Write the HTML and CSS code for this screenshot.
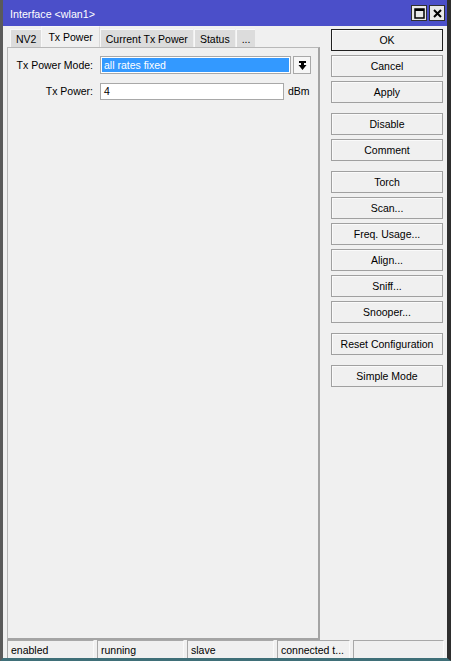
FILE: index.html
```html
<!DOCTYPE html>
<html>
<head>
<meta charset="utf-8">
<link rel="stylesheet" href="styles.css">
</head>
<body>
<div class="window">
  <div class="titlebar">
    <span class="title">Interface &lt;wlan1&gt;</span>
    <div class="tbtns">
      <span class="tbtn"><svg width="13" height="13" viewBox="0 0 13 13"><rect x="2" y="2" width="9" height="9" fill="none" stroke="#000" stroke-width="1.5"/><line x1="2" y1="3" x2="11" y2="3" stroke="#000" stroke-width="2"/></svg></span>
      <span class="tbtn"><svg width="13" height="13" viewBox="0 0 13 13"><path d="M3 3 L10 10 M10 3 L3 10" stroke="#000" stroke-width="2"/></svg></span>
    </div>
  </div>
  <div class="main">
    <div class="leftcol">
      <div class="tabs">
        <div class="tab">NV2</div>
        <div class="tab active">Tx Power</div>
        <div class="tab">Current Tx Power</div>
        <div class="tab">Status</div>
        <div class="tab">...</div>
      </div>
      <div class="panel">
        <div class="row">
          <label class="lbl">Tx Power Mode:</label>
          <div class="select"><span class="selval">all rates fixed</span></div>
          <div class="dd"><svg width="9" height="9" viewBox="0 0 9 9"><rect x="1" y="0" width="7" height="2" fill="#000"/><path d="M4.5 9 L0.5 4 L3 4 L3 2 L6 2 L6 4 L8.5 4 Z" fill="#000"/></svg></div>
        </div>
        <div class="row row2">
          <label class="lbl">Tx Power:</label>
          <div class="input">4</div>
          <span class="unit">dBm</span>
        </div>
      </div>
    </div>
    <div class="buttons">
      <div class="group">
        <div class="btn default">OK</div>
        <div class="btn">Cancel</div>
        <div class="btn">Apply</div>
      </div>
      <div class="group">
        <div class="btn">Disable</div>
        <div class="btn">Comment</div>
      </div>
      <div class="group">
        <div class="btn">Torch</div>
        <div class="btn">Scan...</div>
        <div class="btn">Freq. Usage...</div>
        <div class="btn">Align...</div>
        <div class="btn">Sniff...</div>
        <div class="btn">Snooper...</div>
      </div>
      <div class="group">
        <div class="btn">Reset Configuration</div>
      </div>
      <div class="group">
        <div class="btn">Simple Mode</div>
      </div>
    </div>
  </div>
  <div class="status">
    <div class="cell w87">enabled</div>
    <div class="cell w87">running</div>
    <div class="cell w87">slave</div>
    <div class="cell w73">connected t...</div>
    <div class="cell grow"></div>
  </div>
</div>
</body>
</html>
```

FILE: styles.css
```css
* { box-sizing: border-box; }
html, body { margin: 0; padding: 0; }
body {
  width: 451px;
  height: 661px;
  overflow: hidden;
  background: #6e6e6e;
  font-family: "Liberation Sans", Arial, sans-serif;
  font-size: 10.5px;
  color: #000;
}
.window {
  width: 451px;
  height: 661px;
  display: flex;
  flex-direction: column;
  background: #f0f0f0;
  border-left: 3px solid #5a5a5a;
  border-right: 4px solid #2e2e2e;
  border-bottom: 3px solid #3f6f78;
}
.titlebar {
  height: 26px;
  flex: none;
  background: #4b4fc9;
  display: flex;
  align-items: center;
  justify-content: space-between;
  padding: 0 2px 0 7px;
}
.title {
  color: #fff;
  font-size: 10.7px;
  padding-top: 1px;
}
.tbtns { display: flex; gap: 2px; }
.tbtn {
  width: 16px;
  height: 16px;
  background: #e8e8e8;
  border: 1px solid #303030;
  display: flex;
  align-items: center;
  justify-content: center;
}
.main {
  flex: 1;
  display: flex;
  padding-left: 4px;
}
.leftcol {
  width: 313px;
  display: flex;
  flex-direction: column;
}
.tabs {
  display: flex;
  align-items: flex-end;
  height: 21px;
  padding-left: 3px;
  gap: 1px;
}
.tab {
  height: 18px;
  background: #dcdcdc;
  padding: 3px 5px 0;
  border-top: 1px solid #f8f8f8;
  border-left: 1px solid #f8f8f8;
  white-space: nowrap;
}
.tab.active {
  height: 21px;
  background: #f0f0f0;
  padding: 4px 6px 0;
  margin: 0 -1px;
  border-right: 1px solid #d8d8d8;
  position: relative;
  z-index: 1;
}
.panel {
  flex: 1;
  border: 1px solid #b8b8b8;
  border-right: 2px solid #a4a4a4;
  border-bottom: 2px solid #a4a4a4;
  padding-top: 8px;
}
.row {
  display: flex;
  align-items: center;
  height: 18px;
}
.row2 { margin-top: 8px; }
.lbl {
  width: 85px;
  text-align: right;
  flex: none;
}
.select {
  margin-left: 7px;
  width: 191px;
  height: 18px;
  border: 1px solid #a8a8a8;
  background: #fff;
  padding: 1px;
}
.selval {
  display: block;
  height: 14px;
  background: #3399ff;
  color: #fff;
  line-height: 14px;
  padding-left: 2px;
}
.dd {
  margin-left: 2px;
  width: 18px;
  height: 18px;
  border: 1px solid #a8a8a8;
  background: #f6f6f6;
  display: flex;
  align-items: center;
  justify-content: center;
}
.input {
  margin-left: 7px;
  width: 184px;
  height: 17px;
  border: 1px solid #a8a8a8;
  background: #fff;
  padding-left: 3px;
  line-height: 15px;
}
.unit { margin-left: 4px; }
.buttons {
  margin-left: 11px;
  padding-top: 3px;
  width: 112px;
  display: flex;
  flex-direction: column;
  gap: 10px;
}
.group {
  display: flex;
  flex-direction: column;
  gap: 4px;
}
.btn {
  height: 22px;
  border: 1px solid #a0a0a0;
  box-shadow: inset 1px 1px 0 #fafafa;
  background: #f0f0f0;
  text-align: center;
  line-height: 20px;
  white-space: nowrap;
}
.btn.default {
  border: 1px solid #202020;
}
.status {
  height: 18px;
  flex: none;
  display: flex;
  gap: 3px;
  padding-left: 4px;
  padding-right: 3px;
}
.cell {
  border-top: 1px solid #a8a8a8;
  border-left: 1px solid #a8a8a8;
  border-right: 1px solid #fafafa;
  padding: 3px 0 0 3px;
  white-space: nowrap;
  overflow: hidden;
}
.w87 { width: 87px; }
.w73 { width: 73px; }
.grow { flex: 1; }
```
